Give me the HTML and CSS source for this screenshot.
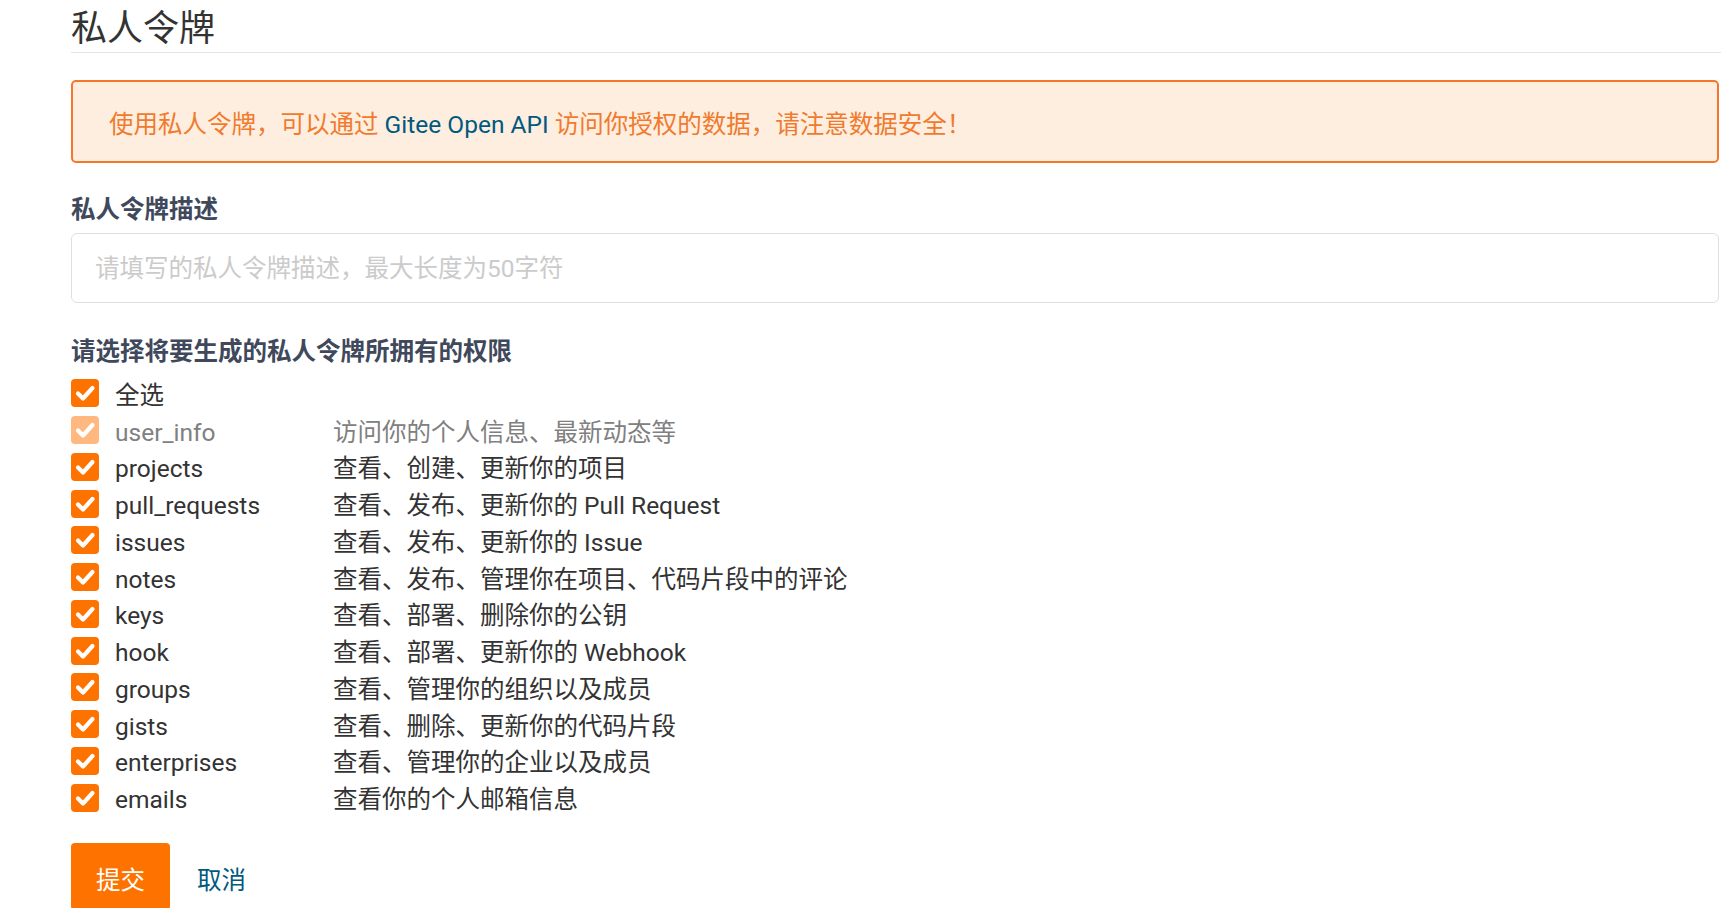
FILE: index.html
```html
<!DOCTYPE html>
<html lang="zh-CN">
<head>
    <meta charset="UTF-8">
    <meta name="viewport" content="width=device-width, initial-scale=1.0">
    <title>私人令牌</title>
    <link rel="stylesheet" href="styles.css">
</head>
<body>
    <div class="page">
        <h1 class="page-title">私人令牌</h1>

        <div class="notice">
            使用私人令牌，可以通过 <a href="#">Gitee Open API</a> 访问你授权的数据，请注意数据安全！
        </div>

        <form class="token-form">
            <label class="field-label" for="desc">私人令牌描述</label>
            <input class="field-input" id="desc" type="text" placeholder="请填写的私人令牌描述，最大长度为50字符">

            <div class="field-label scopes-title">请选择将要生成的私人令牌所拥有的权限</div>

            <ul class="scopes">
                <li class="scope">
                    <span class="box"><svg viewBox="0 0 28 28"><polyline points="7,14.5 12,19.5 21.5,9"/></svg></span>
                    <span class="name">全选</span>
                </li>
                <li class="scope disabled">
                    <span class="box"><svg viewBox="0 0 28 28"><polyline points="7,14.5 12,19.5 21.5,9"/></svg></span>
                    <span class="name">user_info</span>
                    <span class="desc">访问你的个人信息、最新动态等</span>
                </li>
                <li class="scope">
                    <span class="box"><svg viewBox="0 0 28 28"><polyline points="7,14.5 12,19.5 21.5,9"/></svg></span>
                    <span class="name">projects</span>
                    <span class="desc">查看、创建、更新你的项目</span>
                </li>
                <li class="scope">
                    <span class="box"><svg viewBox="0 0 28 28"><polyline points="7,14.5 12,19.5 21.5,9"/></svg></span>
                    <span class="name">pull_requests</span>
                    <span class="desc">查看、发布、更新你的 Pull Request</span>
                </li>
                <li class="scope">
                    <span class="box"><svg viewBox="0 0 28 28"><polyline points="7,14.5 12,19.5 21.5,9"/></svg></span>
                    <span class="name">issues</span>
                    <span class="desc">查看、发布、更新你的 Issue</span>
                </li>
                <li class="scope">
                    <span class="box"><svg viewBox="0 0 28 28"><polyline points="7,14.5 12,19.5 21.5,9"/></svg></span>
                    <span class="name">notes</span>
                    <span class="desc">查看、发布、管理你在项目、代码片段中的评论</span>
                </li>
                <li class="scope">
                    <span class="box"><svg viewBox="0 0 28 28"><polyline points="7,14.5 12,19.5 21.5,9"/></svg></span>
                    <span class="name">keys</span>
                    <span class="desc">查看、部署、删除你的公钥</span>
                </li>
                <li class="scope">
                    <span class="box"><svg viewBox="0 0 28 28"><polyline points="7,14.5 12,19.5 21.5,9"/></svg></span>
                    <span class="name">hook</span>
                    <span class="desc">查看、部署、更新你的 Webhook</span>
                </li>
                <li class="scope">
                    <span class="box"><svg viewBox="0 0 28 28"><polyline points="7,14.5 12,19.5 21.5,9"/></svg></span>
                    <span class="name">groups</span>
                    <span class="desc">查看、管理你的组织以及成员</span>
                </li>
                <li class="scope">
                    <span class="box"><svg viewBox="0 0 28 28"><polyline points="7,14.5 12,19.5 21.5,9"/></svg></span>
                    <span class="name">gists</span>
                    <span class="desc">查看、删除、更新你的代码片段</span>
                </li>
                <li class="scope">
                    <span class="box"><svg viewBox="0 0 28 28"><polyline points="7,14.5 12,19.5 21.5,9"/></svg></span>
                    <span class="name">enterprises</span>
                    <span class="desc">查看、管理你的企业以及成员</span>
                </li>
                <li class="scope">
                    <span class="box"><svg viewBox="0 0 28 28"><polyline points="7,14.5 12,19.5 21.5,9"/></svg></span>
                    <span class="name">emails</span>
                    <span class="desc">查看你的个人邮箱信息</span>
                </li>
            </ul>

            <div class="actions">
                <button class="btn-submit" type="button">提交</button>
                <a class="btn-cancel" href="#">取消</a>
            </div>
        </form>
    </div>
</body>
</html>
```

FILE: styles.css
```css
html, body {
    overflow: hidden;
}

body {
    margin: 0;
    font-family: Roboto, "Noto Sans CJK SC", sans-serif;
    font-size: 24.5px;
    color: #333;
    background: #fff;
}

a {
    color: #005980;
    text-decoration: none;
}

.page {
    padding-left: 71px;
}

.page-title {
    margin: 0;
    padding-top: 6px;
    font-size: 36px;
    font-weight: normal;
    line-height: 46px;
    color: #333;
    border-bottom: 1px solid #e3e3e3;
}

.notice {
    margin: 27px 2px 0 0;
    padding: 23px 36px 17px;
    line-height: 39px;
    color: #f07a2d;
    background: #feeedf;
    border: 2px solid #f5782a;
    border-radius: 5px;
}

.token-form {
    margin-right: 2px;
}

.field-label {
    display: block;
    margin: 28px 0 6px;
    padding-top: 2px;
    line-height: 34px;
    font-weight: bold;
    color: #40485b;
}

.field-input {
    display: block;
    box-sizing: border-box;
    width: 100%;
    height: 70px;
    margin: 0;
    padding: 0 23px;
    font-family: inherit;
    font-size: 24.5px;
    color: #333;
    border: 1px solid #dcdfe6;
    border-radius: 6px;
    outline: none;
}

.field-input::placeholder {
    color: #cbcbcb;
}

.scopes-title {
    margin-top: 30px;
}

.scopes {
    list-style: none;
    margin: 1px 0 0;
    padding: 0;
}

.scope {
    display: flex;
    align-items: center;
    height: 36.75px;
}

.box {
    display: flex;
    flex: none;
    width: 28px;
    height: 28px;
    margin-right: 16px;
    background: #fe7300;
    border-radius: 4px;
}

.box svg {
    width: 28px;
    height: 28px;
    fill: none;
    stroke: #fff;
    stroke-width: 4.2;
    stroke-linecap: round;
    stroke-linejoin: round;
}

.name {
    width: 218px;
    padding-top: 5px;
    line-height: 36px;
}

.desc {
    padding-top: 5px;
    line-height: 36px;
}

.scope.disabled .box {
    background: #ffb980;
}

.scope.disabled .name,
.scope.disabled .desc {
    color: #808080;
}

.actions {
    display: flex;
    align-items: center;
    margin-top: 27px;
}

.btn-submit {
    height: 67px;
    padding: 3px 25px 0;
    font-family: inherit;
    font-size: 24.5px;
    color: #fff;
    background: #fe7300;
    border: none;
    border-radius: 4px;
}

.btn-cancel {
    margin-left: 27px;
    padding-top: 3px;
}
```
